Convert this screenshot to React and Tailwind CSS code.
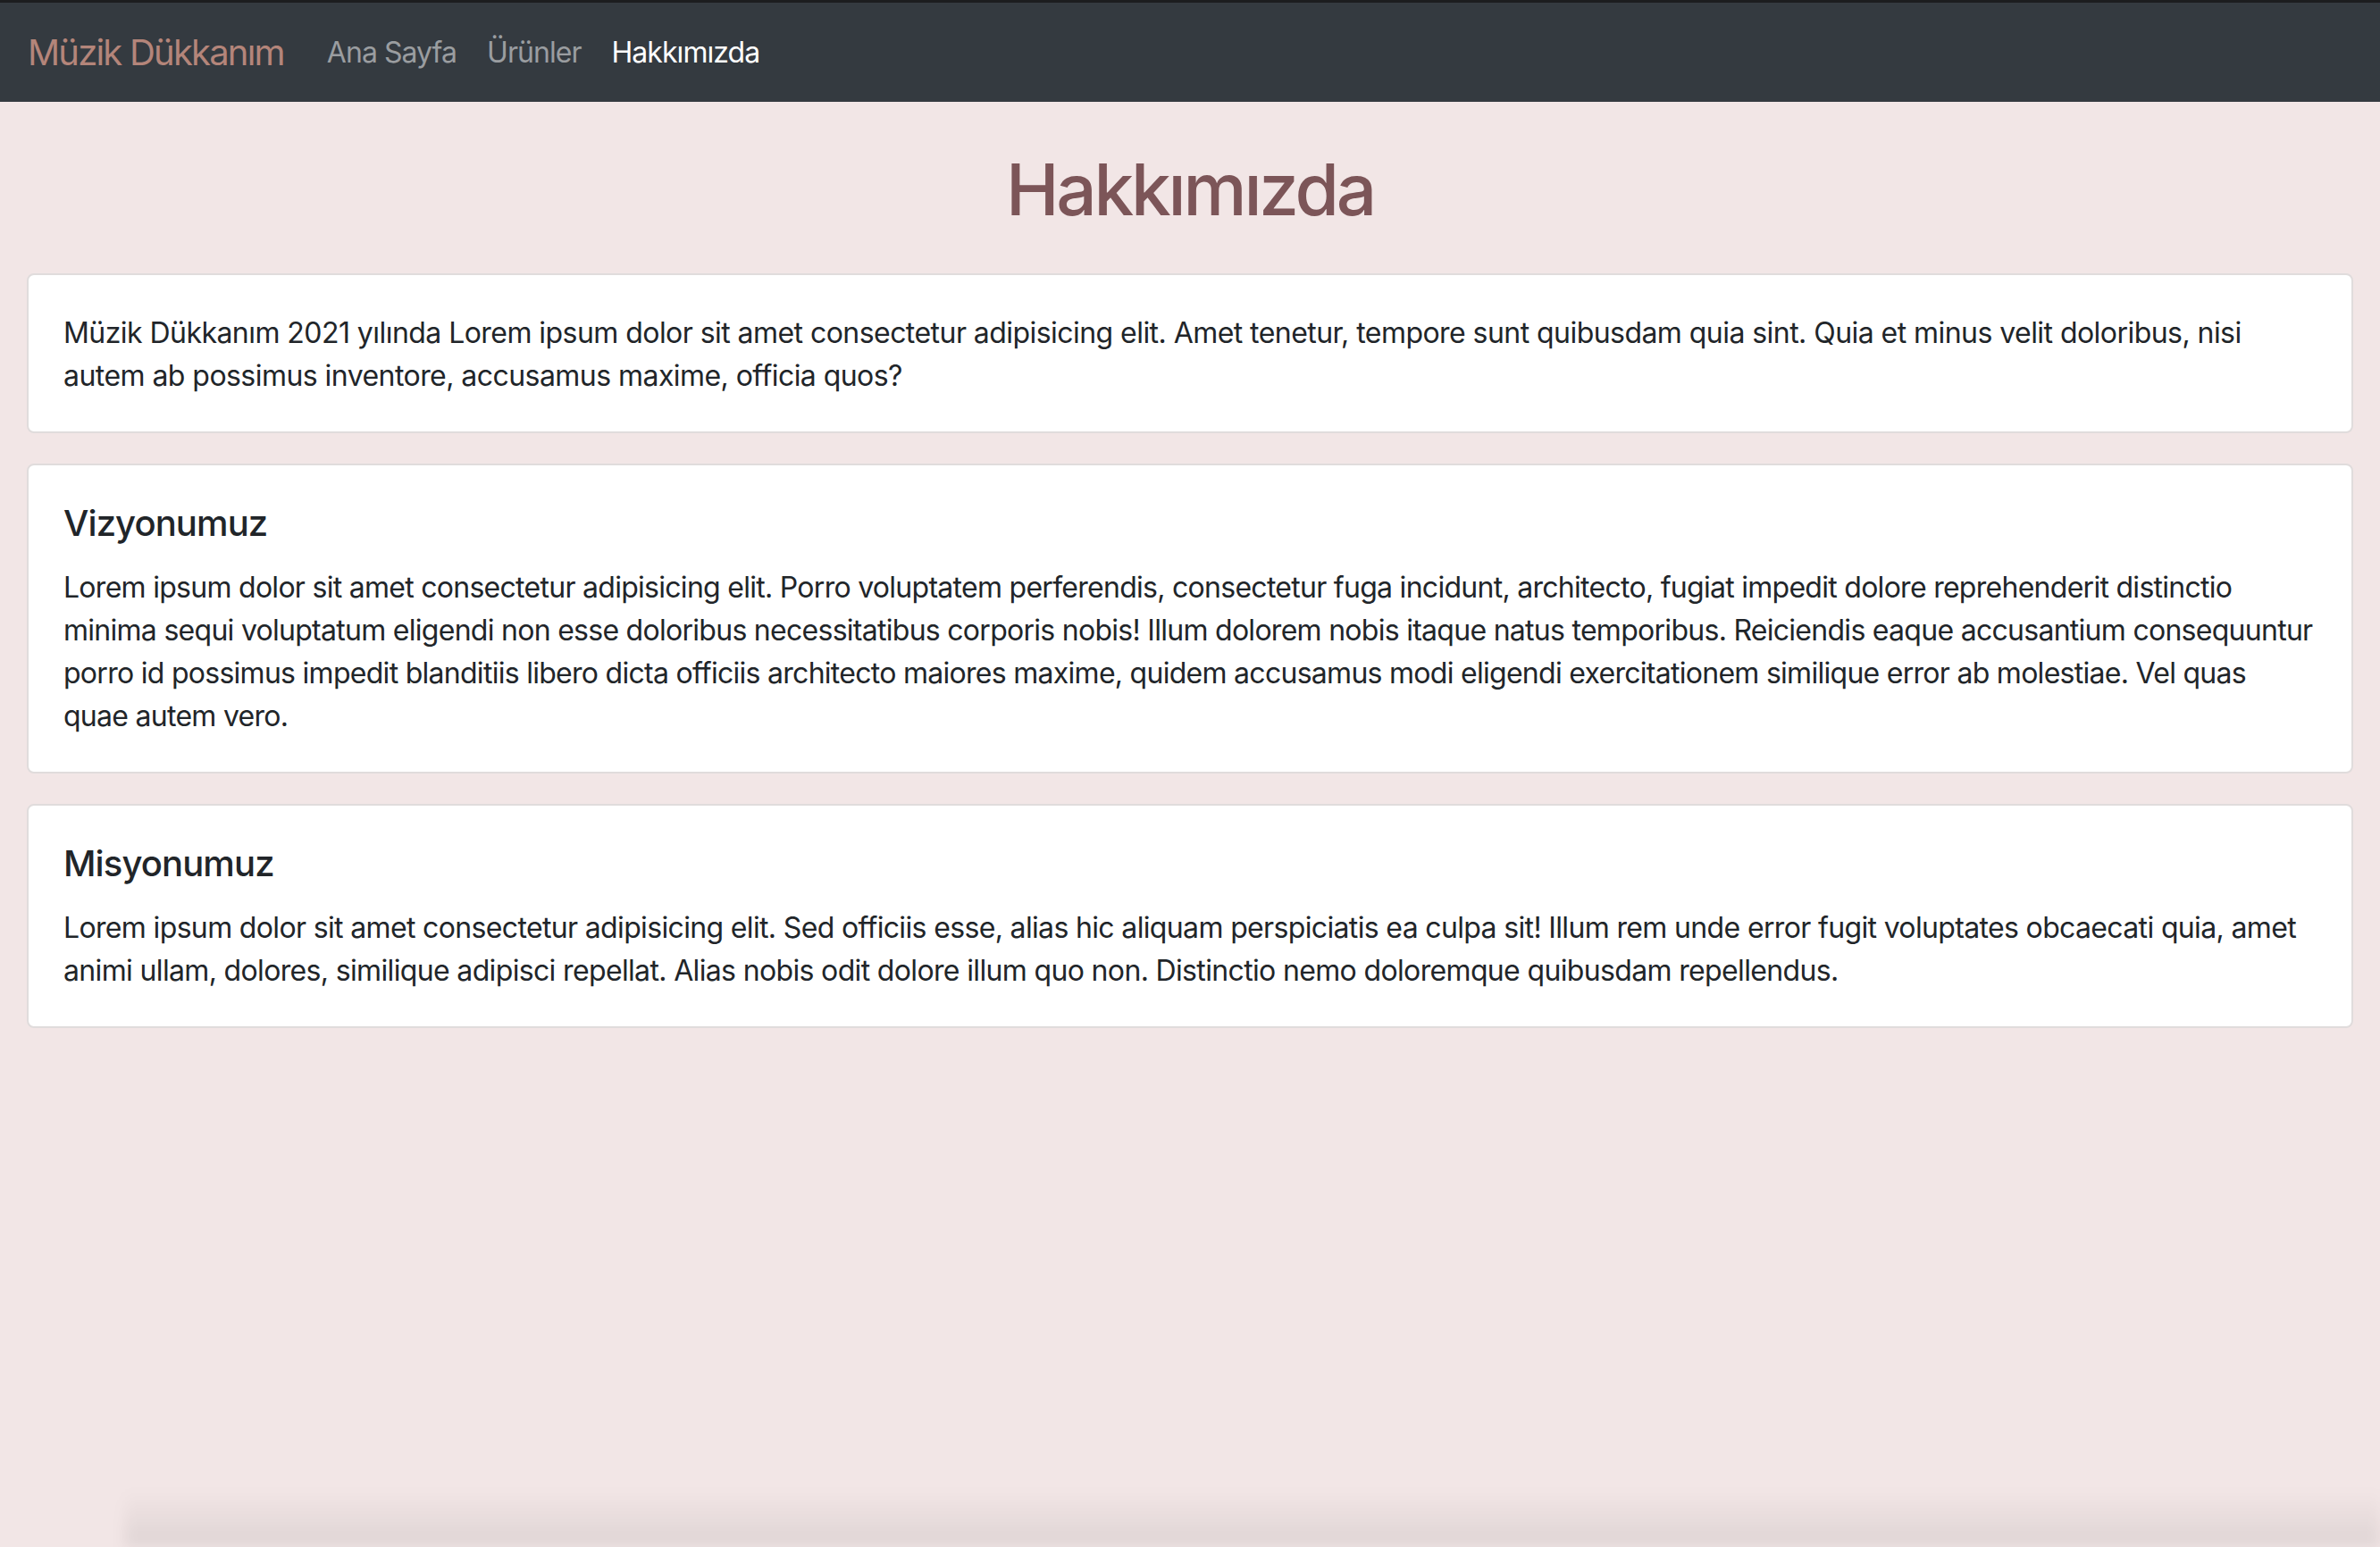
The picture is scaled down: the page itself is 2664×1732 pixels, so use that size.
import React from 'react'

const sections = [
  {
    id: 'intro',
    tracking: 'tracking-[-0.55px]',
    text: 'Müzik Dükkanım 2021 yılında Lorem ipsum dolor sit amet consectetur adipisicing elit. Amet tenetur, tempore sunt quibusdam quia sint. Quia et minus velit doloribus, nisi autem ab possimus inventore, accusamus maxime, officia quos?'
  },
  {
    id: 'vision',
    title: 'Vizyonumuz',
    tracking: 'tracking-[-0.72px]',
    text: 'Lorem ipsum dolor sit amet consectetur adipisicing elit. Porro voluptatem perferendis, consectetur fuga incidunt, architecto, fugiat impedit dolore reprehenderit distinctio minima sequi voluptatum eligendi non esse doloribus necessitatibus corporis nobis! Illum dolorem nobis itaque natus temporibus. Reiciendis eaque accusantium consequuntur porro id possimus impedit blanditiis libero dicta officiis architecto maiores maxime, quidem accusamus modi eligendi exercitationem similique error ab molestiae. Vel quas quae autem vero.'
  },
  {
    id: 'mission',
    title: 'Misyonumuz',
    tracking: 'tracking-[-0.65px]',
    text: 'Lorem ipsum dolor sit amet consectetur adipisicing elit. Sed officiis esse, alias hic aliquam perspiciatis ea culpa sit! Illum rem unde error fugit voluptates obcaecati quia, amet animi ullam, dolores, similique adipisci repellat. Alias nobis odit dolore illum quo non. Distinctio nemo doloremque quibusdam repellendus.'
  }
]

const links = [
  { name: 'Ana Sayfa', active: false },
  { name: 'Ürünler', active: false },
  { name: 'Hakkımızda', active: true }
]

const App = () => {
  return (
    <div className="relative min-h-screen bg-[#f2e6e6] font-['Inter','Liberation_Sans',sans-serif] text-[#212529]">
      {/* Navbar */}
      <nav className="h-[114px] bg-[#343a40] border-t-[3px] border-[#1c1d1f] flex items-center px-[31px]">
        <span className="text-[40px] leading-[48px] text-[#b4857a] tracking-[-1.8px] mr-[48px]">Müzik Dükkanım</span>
        <div className="flex items-center gap-[34px]">
          {links.map((link) => (
            <span
              key={link.name}
              className={`text-[32px] leading-[48px] tracking-[-0.95px] ${
                link.active ? 'text-white' : 'text-[#9a9da0]'
              }`}
            >
              {link.name}
            </span>
          ))}
        </div>
      </nav>

      {/* Content */}
      <div className="px-[30px]">
        <h1 className="text-center text-[80px] leading-[96px] font-medium text-[#7c5558] tracking-[-3.2px] mt-[50px] mb-[46px]">
          Hakkımızda
        </h1>

        <div className="flex flex-col gap-[34px]">
          {sections.map((s) => (
            <div key={s.id} className="bg-white border-2 border-[#e0dcdc] rounded-[8px] px-[39px] pt-[41px] pb-[38px]">
              {s.title && (
                <h5 className="text-[40px] leading-[48px] font-medium mb-[24px] tracking-[-0.9px]">{s.title}</h5>
              )}
              <p className={`text-[32px] leading-[48px] ${s.tracking}`}>{s.text}</p>
            </div>
          ))}
        </div>
      </div>

      {/* window shadow at the bottom edge */}
      <div className="pointer-events-none absolute bottom-0 left-[140px] right-0 h-[64px] bg-gradient-to-b from-transparent to-black/[0.08] blur-[8px]" />
    </div>
  )
}

export default App
